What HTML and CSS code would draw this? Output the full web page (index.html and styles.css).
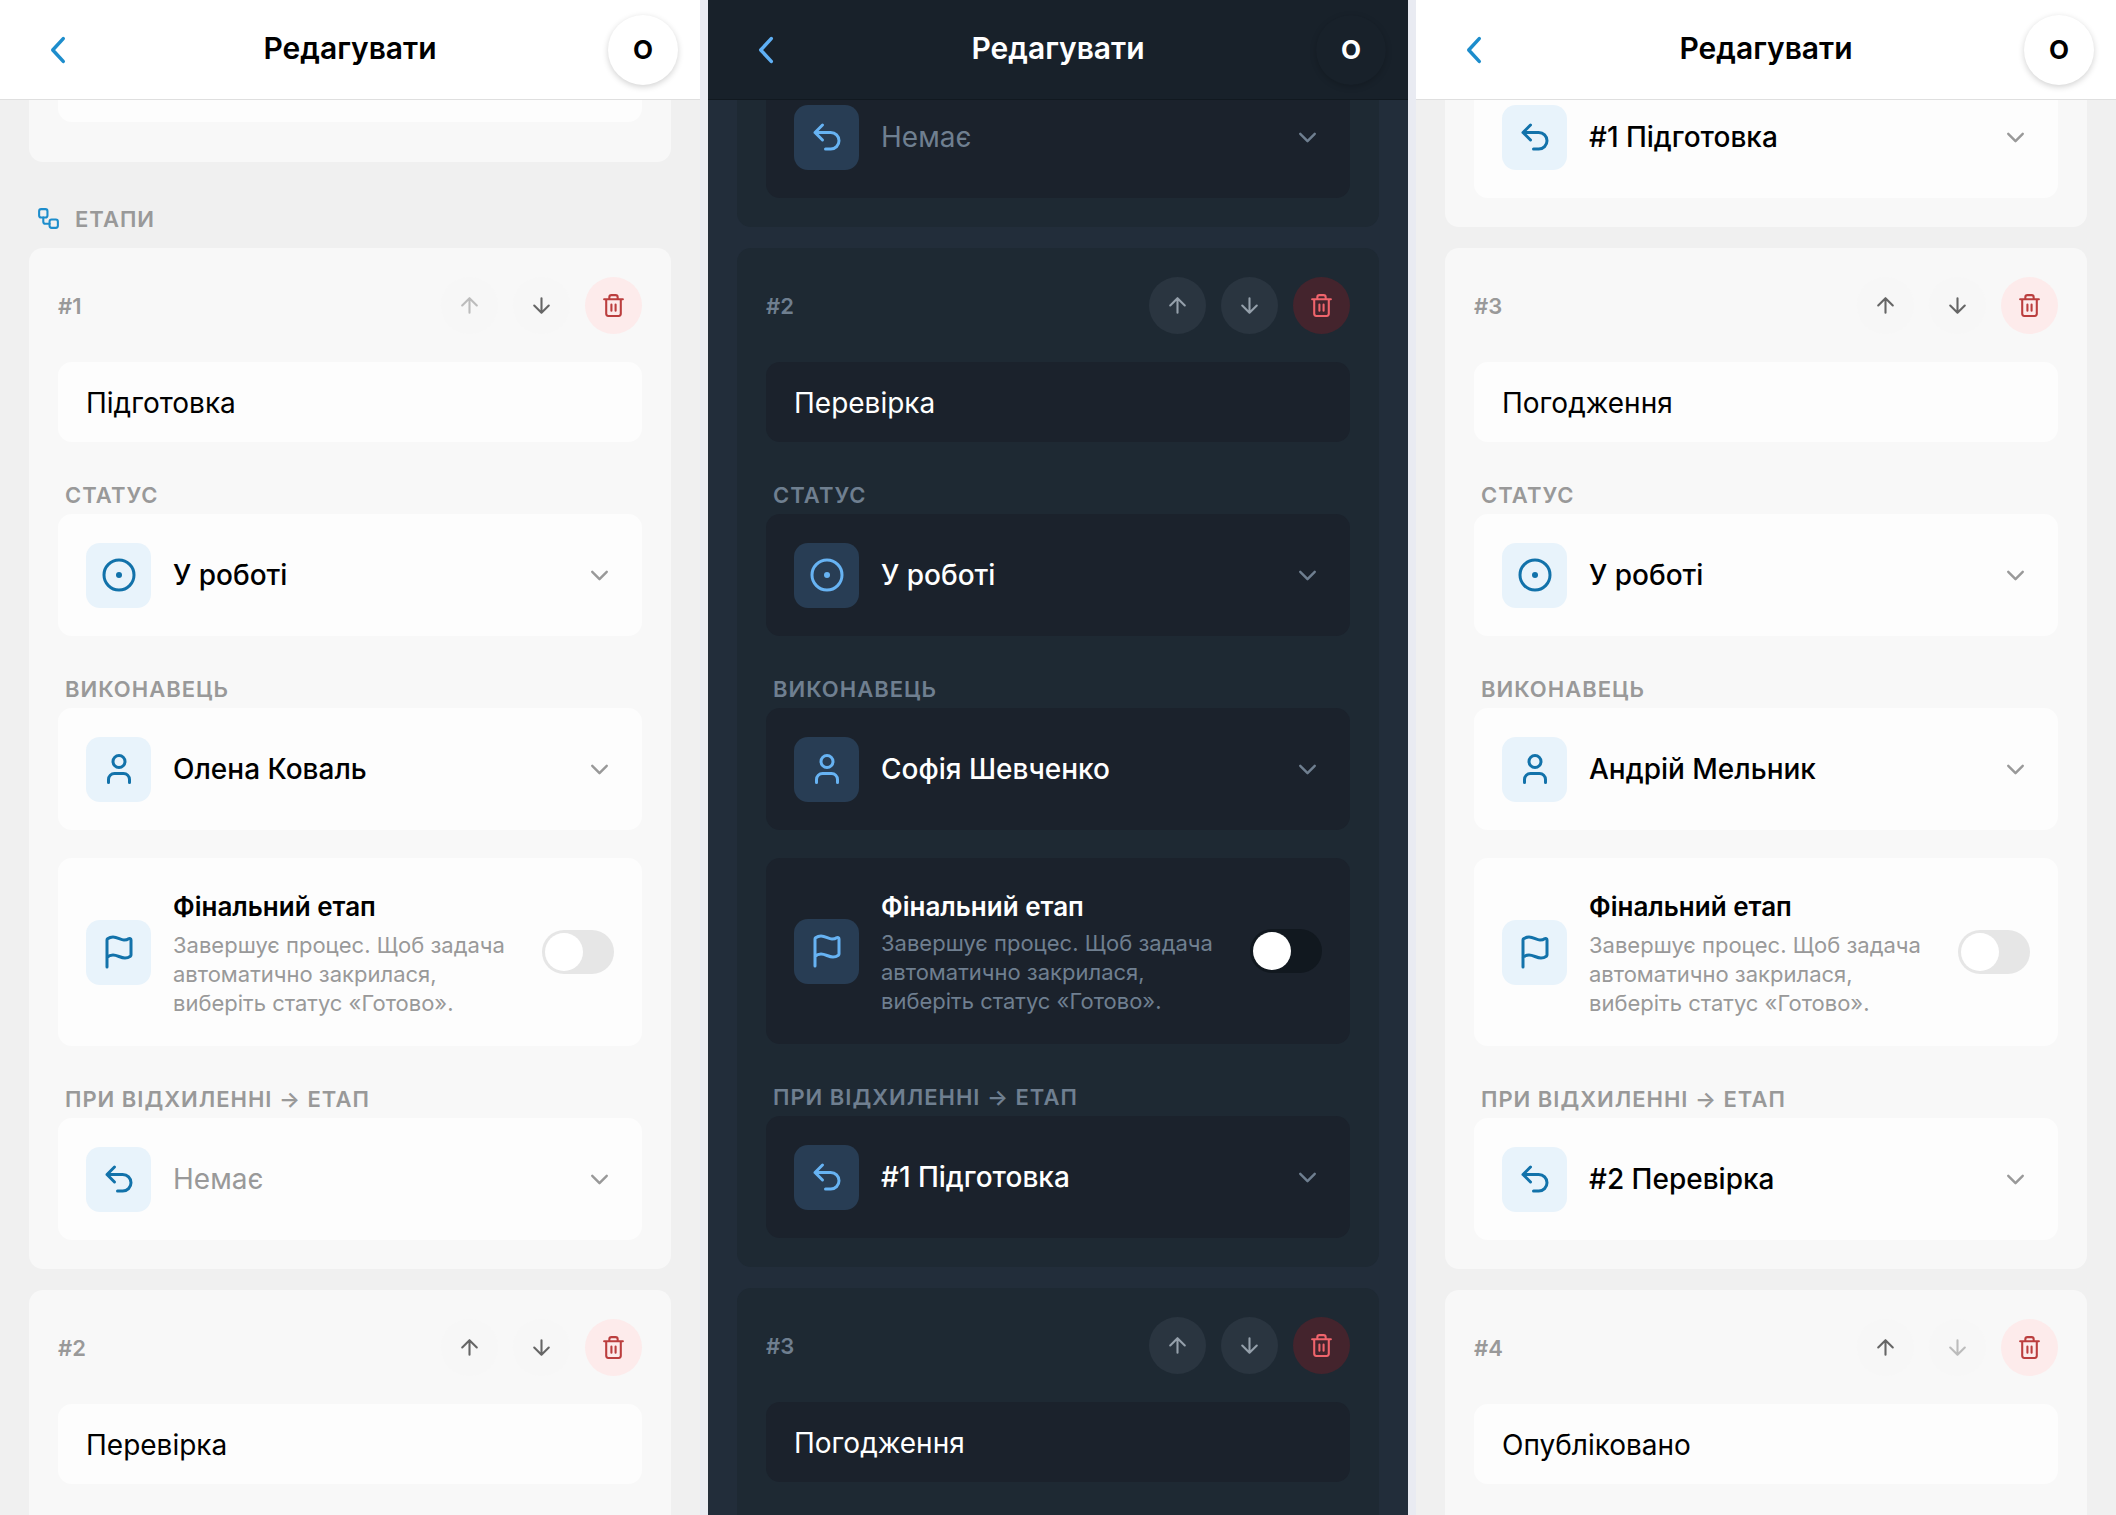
FILE: index.html
```html
<!DOCTYPE html>
<html lang="uk">
<head>
<meta charset="utf-8">
<title>Редагувати</title>
<link rel="stylesheet" href="styles.css">
</head>
<body>
<svg class="sprite" aria-hidden="true">
  <symbol id="i-back" viewBox="0 0 24 24"><path d="M15 5.500l-6 6.500 6 6.500"/></symbol>
  <symbol id="i-flow" viewBox="0 0 24 24"><rect x="3" y="3" width="8" height="8" rx="2"/><rect x="13" y="13" width="8" height="8" rx="2"/><path d="M7 11v4a2 2 0 0 0 2 2h4"/></symbol>
  <symbol id="i-up" viewBox="0 0 24 24"><path d="M12 19V5M5 12l7-7 7 7"/></symbol>
  <symbol id="i-down" viewBox="0 0 24 24"><path d="M12 5v14M19 12l-7 7-7-7"/></symbol>
  <symbol id="i-trash" viewBox="0 0 24 24"><path d="M3 6h18M19 6v14a2 2 0 0 1-2 2H7a2 2 0 0 1-2-2V6M8 6V4a2 2 0 0 1 2-2h4a2 2 0 0 1 2 2v2M10 11v6M14 11v6"/></symbol>
  <symbol id="i-status" viewBox="0 0 24 24"><circle cx="12" cy="12" r="10"/><circle class="dot" cx="12" cy="12" r="2"/></symbol>
  <symbol id="i-user" viewBox="0 0 24 24"><circle cx="12" cy="7" r="4"/><path d="M19 21v-2a4 4 0 0 0-4-4H9a4 4 0 0 0-4 4v2"/></symbol>
  <symbol id="i-flag" viewBox="0 0 24 24"><path d="M4 22V4a1 1 0 0 1 .4-.8A6 6 0 0 1 8 2c3 0 5 2 7.333 2q2 0 3.067-.8A1 1 0 0 1 20 4v10a1 1 0 0 1-.4.8A6 6 0 0 1 16 16c-3 0-5-2-8-2a6 6 0 0 0-4 1.528"/></symbol>
  <symbol id="i-return" viewBox="0 0 24 24"><path d="M9 14L4 9l5-5M4 9h10.500a5.500 5.500 0 0 1 0 11H11"/></symbol>
  <symbol id="i-chevron" viewBox="0 0 24 24"><path d="M6 9l6 6 6-6"/></symbol>
</svg>
<main class="board">

  <section class="screen">
    <header class="bar">
      <button class="back" aria-label="Назад"><svg><use href="#i-back"/></svg></button>
      <h1>Редагувати</h1>
      <button class="avatar">О</button>
    </header>
    <div class="list">
      <div class="card card-above">
        <input class="field" aria-label="Опис">
      </div>
      <h2 class="section"><svg><use href="#i-flow"/></svg>ЕТАПИ</h2>
      <article class="card">
        <div class="head"><span class="num">#1</span>
          <button class="round" aria-label="Вгору" disabled><svg><use href="#i-up"/></svg></button>
          <button class="round" aria-label="Вниз"><svg><use href="#i-down"/></svg></button>
          <button class="round danger" aria-label="Видалити"><svg><use href="#i-trash"/></svg></button>
        </div>
        <input class="field" aria-label="Назва" value="Підготовка">
        <label class="label" for="s1">СТАТУС</label>
        <div class="pick"><span class="tile"><svg><use href="#i-status"/></svg></span><select id="s1"><option>У роботі</option></select><svg class="chev"><use href="#i-chevron"/></svg></div>
        <label class="label" for="p1">ВИКОНАВЕЦЬ</label>
        <div class="pick"><span class="tile"><svg><use href="#i-user"/></svg></span><select id="p1"><option>Олена Коваль</option></select><svg class="chev"><use href="#i-chevron"/></svg></div>
        <label class="final"><span class="tile"><svg><use href="#i-flag"/></svg></span><span class="copy"><b>Фінальний етап</b><small>Завершує процес. Щоб задача автоматично закрилася, виберіть статус «Готово».</small></span><input type="checkbox" class="switch"></label>
        <label class="label" for="r1">ПРИ ВІДХИЛЕННІ → ЕТАП</label>
        <div class="pick empty"><span class="tile"><svg><use href="#i-return"/></svg></span><select id="r1"><option>Немає</option></select><svg class="chev"><use href="#i-chevron"/></svg></div>
      </article>
      <article class="card card-last">
        <div class="head"><span class="num">#2</span>
          <button class="round" aria-label="Вгору"><svg><use href="#i-up"/></svg></button>
          <button class="round" aria-label="Вниз"><svg><use href="#i-down"/></svg></button>
          <button class="round danger" aria-label="Видалити"><svg><use href="#i-trash"/></svg></button>
        </div>
        <input class="field" aria-label="Назва" value="Перевірка">
      </article>
    </div>
  </section>

  <section class="screen dark">
    <header class="bar">
      <button class="back" aria-label="Назад"><svg><use href="#i-back"/></svg></button>
      <h1>Редагувати</h1>
      <button class="avatar">О</button>
    </header>
    <div class="list">
      <article class="card card-scrolled">
        <div class="pick empty"><span class="tile"><svg><use href="#i-return"/></svg></span><select aria-label="При відхиленні"><option>Немає</option></select><svg class="chev"><use href="#i-chevron"/></svg></div>
      </article>
      <article class="card">
        <div class="head"><span class="num">#2</span>
          <button class="round" aria-label="Вгору"><svg><use href="#i-up"/></svg></button>
          <button class="round" aria-label="Вниз"><svg><use href="#i-down"/></svg></button>
          <button class="round danger" aria-label="Видалити"><svg><use href="#i-trash"/></svg></button>
        </div>
        <input class="field" aria-label="Назва" value="Перевірка">
        <label class="label" for="s2">СТАТУС</label>
        <div class="pick"><span class="tile"><svg><use href="#i-status"/></svg></span><select id="s2"><option>У роботі</option></select><svg class="chev"><use href="#i-chevron"/></svg></div>
        <label class="label" for="p2">ВИКОНАВЕЦЬ</label>
        <div class="pick"><span class="tile"><svg><use href="#i-user"/></svg></span><select id="p2"><option>Софія Шевченко</option></select><svg class="chev"><use href="#i-chevron"/></svg></div>
        <label class="final"><span class="tile"><svg><use href="#i-flag"/></svg></span><span class="copy"><b>Фінальний етап</b><small>Завершує процес. Щоб задача автоматично закрилася, виберіть статус «Готово».</small></span><input type="checkbox" class="switch"></label>
        <label class="label" for="r2">ПРИ ВІДХИЛЕННІ → ЕТАП</label>
        <div class="pick"><span class="tile"><svg><use href="#i-return"/></svg></span><select id="r2"><option>#1 Підготовка</option></select><svg class="chev"><use href="#i-chevron"/></svg></div>
      </article>
      <article class="card card-last">
        <div class="head"><span class="num">#3</span>
          <button class="round" aria-label="Вгору"><svg><use href="#i-up"/></svg></button>
          <button class="round" aria-label="Вниз"><svg><use href="#i-down"/></svg></button>
          <button class="round danger" aria-label="Видалити"><svg><use href="#i-trash"/></svg></button>
        </div>
        <input class="field" aria-label="Назва" value="Погодження">
      </article>
    </div>
  </section>

  <section class="screen">
    <header class="bar">
      <button class="back" aria-label="Назад"><svg><use href="#i-back"/></svg></button>
      <h1>Редагувати</h1>
      <button class="avatar">О</button>
    </header>
    <div class="list">
      <article class="card card-scrolled">
        <div class="pick"><span class="tile"><svg><use href="#i-return"/></svg></span><select aria-label="При відхиленні"><option>#1 Підготовка</option></select><svg class="chev"><use href="#i-chevron"/></svg></div>
      </article>
      <article class="card">
        <div class="head"><span class="num">#3</span>
          <button class="round" aria-label="Вгору"><svg><use href="#i-up"/></svg></button>
          <button class="round" aria-label="Вниз"><svg><use href="#i-down"/></svg></button>
          <button class="round danger" aria-label="Видалити"><svg><use href="#i-trash"/></svg></button>
        </div>
        <input class="field" aria-label="Назва" value="Погодження">
        <label class="label" for="s3">СТАТУС</label>
        <div class="pick"><span class="tile"><svg><use href="#i-status"/></svg></span><select id="s3"><option>У роботі</option></select><svg class="chev"><use href="#i-chevron"/></svg></div>
        <label class="label" for="p3">ВИКОНАВЕЦЬ</label>
        <div class="pick"><span class="tile"><svg><use href="#i-user"/></svg></span><select id="p3"><option>Андрій Мельник</option></select><svg class="chev"><use href="#i-chevron"/></svg></div>
        <label class="final"><span class="tile"><svg><use href="#i-flag"/></svg></span><span class="copy"><b>Фінальний етап</b><small>Завершує процес. Щоб задача автоматично закрилася, виберіть статус «Готово».</small></span><input type="checkbox" class="switch"></label>
        <label class="label" for="r3">ПРИ ВІДХИЛЕННІ → ЕТАП</label>
        <div class="pick"><span class="tile"><svg><use href="#i-return"/></svg></span><select id="r3"><option>#2 Перевірка</option></select><svg class="chev"><use href="#i-chevron"/></svg></div>
      </article>
      <article class="card card-last">
        <div class="head"><span class="num">#4</span>
          <button class="round" aria-label="Вгору"><svg><use href="#i-up"/></svg></button>
          <button class="round" aria-label="Вниз" disabled><svg><use href="#i-down"/></svg></button>
          <button class="round danger" aria-label="Видалити"><svg><use href="#i-trash"/></svg></button>
        </div>
        <input class="field" aria-label="Назва" value="Опубліковано">
      </article>
    </div>
  </section>

</main>
</body>
</html>
```
FILE: styles.css
```css
* { box-sizing: border-box; }

body {
  margin: 0;
  background: #e9ebf2;
  font-family: Inter, "Liberation Sans", sans-serif;
}

button, input, select { font: inherit; color: inherit; border: 0; margin: 0; }
button { padding: 0; background: none; }

svg {
  display: block;
  fill: none;
  stroke: currentColor;
  stroke-width: 2;
  stroke-linecap: round;
  stroke-linejoin: round;
}

.sprite { position: absolute; width: 0; height: 0; }
.dot { fill: currentColor; stroke: none; }

.board {
  display: grid;
  grid-template-columns: repeat(3, 1fr);
  gap: 8px;
  height: 100vh;
}

.screen {
  --page: #f0f0f0;
  --bar: #ffffff;
  --line: #dfdfdf;
  --card: #f8f8f8;
  --box: #fdfdfd;
  --text: #000000;
  --muted: #999999;
  --accent: #1d8dcc;
  --icon: #1272aa;
  --tile: #e8f3fb;
  --round: #f7f7f7;
  --arrow: #666666;
  --danger: #bb3e3e;
  --danger-bg: #fdebeb;
  --track: #e6e6e6;
  --copy-gap: 4px;
  display: flex;
  flex-direction: column;
  min-width: 0;
  overflow: hidden;
  background: var(--page);
  color: var(--text);
}

.dark {
  --page: #222d3a;
  --bar: #18212a;
  --line: #111920;
  --card: #1e2933;
  --box: #1b222c;
  --text: #ffffff;
  --muted: #6f7f90;
  --accent: #5fb0f5;
  --icon: #67b3f3;
  --tile: #283d54;
  --round: #2a3540;
  --arrow: #95a0ab;
  --danger: #f0646c;
  --danger-bg: #44242d;
  --track: #11181f;
  --copy-gap: 2px;
}

.bar {
  display: grid;
  grid-template-columns: 70px 1fr 70px;
  align-items: center;
  flex: none;
  height: 100px;
  padding: 0 22px;
  background: var(--bar);
  border-bottom: 1px solid var(--line);
  z-index: 1;
}

.back { color: var(--accent); width: 70px; }
.back svg { width: 42px; height: 42px; margin-left: 15px; }

h1 {
  margin: 0;
  padding-bottom: 3px;
  font-size: 30px;
  line-height: 36px;
  font-weight: 600;
  text-align: center;
}

.avatar {
  width: 70px;
  height: 70px;
  border-radius: 50%;
  background: var(--bar);
  font-size: 26px;
  font-weight: 700;
  box-shadow: 0 2px 6px rgb(0 0 0 / 18%);
}

.list {
  display: flex;
  flex-direction: column;
  flex: 1;
  min-height: 0;
  padding: 0 29px;
  overflow: hidden;
}

.card {
  flex: none;
  padding: 29px;
  margin-bottom: 21px;
  border-radius: 14px;
  background: var(--card);
}

.card-scrolled { margin-top: -53px; }
.card-above { margin-top: -87px; margin-bottom: 0; padding-bottom: 40px; }
.card-last { flex: 1 0 auto; margin-bottom: 0; border-radius: 14px 14px 0 0; }

.section {
  display: flex;
  flex: none;
  align-items: center;
  gap: 14px;
  height: 86px;
  margin: 0;
  padding: 27px 7px 0;
  color: var(--muted);
  font-size: 22px;
  font-weight: 600;
  letter-spacing: 1px;
}
.section svg { width: 25px; height: 25px; color: var(--accent); }

.head { display: flex; align-items: center; gap: 15px; margin-bottom: 28px; }
.num { flex: 1; color: var(--muted); font-size: 22px; font-weight: 600; }

.round {
  display: grid;
  place-items: center;
  width: 57px;
  height: 57px;
  border-radius: 50%;
  background: var(--round);
  color: var(--arrow);
}
.round svg { width: 25px; height: 25px; }
.round:disabled svg { opacity: .4; }
.danger { background: var(--danger-bg); color: var(--danger); }

.field {
  display: block;
  width: 100%;
  height: 80px;
  padding: 2px 28px 0;
  border-radius: 14px;
  background: var(--box);
  font-size: 28px;
}

.label {
  display: block;
  height: 72px;
  padding: 39px 7px 0;
  color: var(--muted);
  font-size: 22px;
  line-height: 28px;
  font-weight: 600;
  letter-spacing: 1px;
}

.pick, .final {
  display: flex;
  align-items: center;
  gap: 22px;
  padding: 28px;
  border-radius: 14px;
  background: var(--box);
}
.pick { height: 122px; }
.final { margin-top: 28px; }

.tile {
  display: grid;
  place-items: center;
  flex: none;
  width: 65px;
  height: 65px;
  border-radius: 14px;
  background: var(--tile);
  color: var(--icon);
}
.tile svg { width: 36px; height: 36px; }

select {
  appearance: none;
  flex: 1;
  min-width: 0;
  padding: 0;
  background: none;
  font-size: 28px;
  font-weight: 500;
}
.empty select { color: var(--muted); font-weight: 400; }
.chev { flex: none; width: 29px; height: 29px; color: var(--muted); }

.copy { flex: 1; min-width: 0; }
.copy b { display: block; font-size: 26px; line-height: 41px; font-weight: 600; }
.copy small {
  display: block;
  margin-top: var(--copy-gap);
  color: var(--muted);
  font-size: 22px;
  line-height: 29px;
}

.switch {
  appearance: none;
  flex: none;
  width: 72px;
  height: 44px;
  padding: 3px;
  border-radius: 22px;
  background: var(--track);
}
.switch::before {
  content: "";
  display: block;
  width: 38px;
  height: 38px;
  border-radius: 50%;
  background: #fff;
}
```
